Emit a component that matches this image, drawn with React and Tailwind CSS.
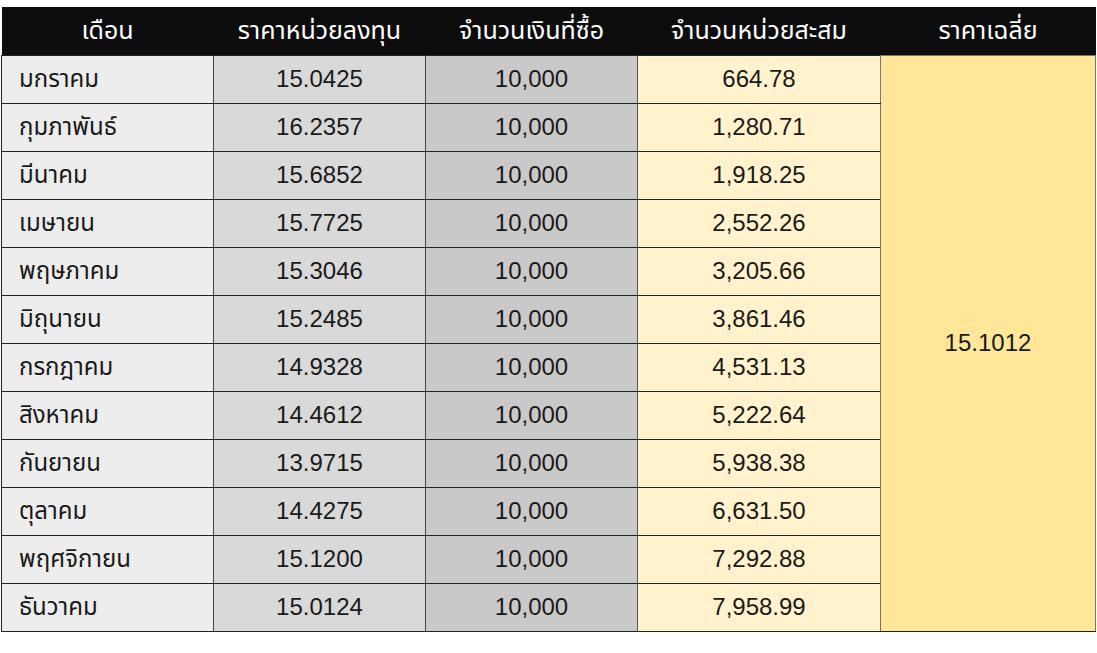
const ROWS = [
  ["มกราคม", "15.0425", "10,000", "664.78"],
  ["กุมภาพันธ์", "16.2357", "10,000", "1,280.71"],
  ["มีนาคม", "15.6852", "10,000", "1,918.25"],
  ["เมษายน", "15.7725", "10,000", "2,552.26"],
  ["พฤษภาคม", "15.3046", "10,000", "3,205.66"],
  ["มิถุนายน", "15.2485", "10,000", "3,861.46"],
  ["กรกฎาคม", "14.9328", "10,000", "4,531.13"],
  ["สิงหาคม", "14.4612", "10,000", "5,222.64"],
  ["กันยายน", "13.9715", "10,000", "5,938.38"],
  ["ตุลาคม", "14.4275", "10,000", "6,631.50"],
  ["พฤศจิกายน", "15.1200", "10,000", "7,292.88"],
  ["ธันวาคม", "15.0124", "10,000", "7,958.99"],
];

const HEADERS = ["เดือน", "ราคาหน่วยลงทุน", "จำนวนเงินที่ซื้อ", "จำนวนหน่วยสะสม", "ราคาเฉลี่ย"];

export default function App() {
  return (
    <div
      className="w-[1097px] h-[653px] bg-white pt-[7px] pl-px"
      style={{ fontFamily: '"Liberation Sans", "Noto Sans Thai", "Noto Sans", sans-serif' }}
    >
      <table className="table-fixed border-collapse text-[24px] text-[#1a1a1a]">
        <colgroup>
          <col className="w-[212px]" />
          <col className="w-[212px]" />
          <col className="w-[212px]" />
          <col className="w-[243px]" />
          <col className="w-[215px]" />
        </colgroup>
        <thead>
          <tr className="bg-[#0d0d0d] text-white">
            {HEADERS.map((h) => (
              <th key={h} className="h-12 p-0 text-center text-[25px] font-normal">
                {h}
              </th>
            ))}
          </tr>
        </thead>
        <tbody>
          {ROWS.map((r, i) => (
            <tr key={r[0]} className="h-12">
              <td className="h-12 border-y border-l border-[#222] bg-[#ededed] p-0 pl-[17px] text-left">
                {r[0]}
              </td>
              <td className="border border-y-[#222] border-x-[#444] bg-[#d9d9d9] p-0 text-center">{r[1]}</td>
              <td className="border border-y-[#222] border-x-[#555] bg-[#c9c9c9] p-0 text-center">{r[2]}</td>
              <td className="border border-y-[#222] border-x-[#7a7a6a] bg-[#fff2cc] p-0 text-center">{r[3]}</td>
              {i === 0 && (
                <td
                  rowSpan={12}
                  className="border border-[#7a7460] border-b-[#222] bg-[#ffe699] p-0 text-center"
                >
                  15.1012
                </td>
              )}
            </tr>
          ))}
        </tbody>
      </table>
    </div>
  );
}
